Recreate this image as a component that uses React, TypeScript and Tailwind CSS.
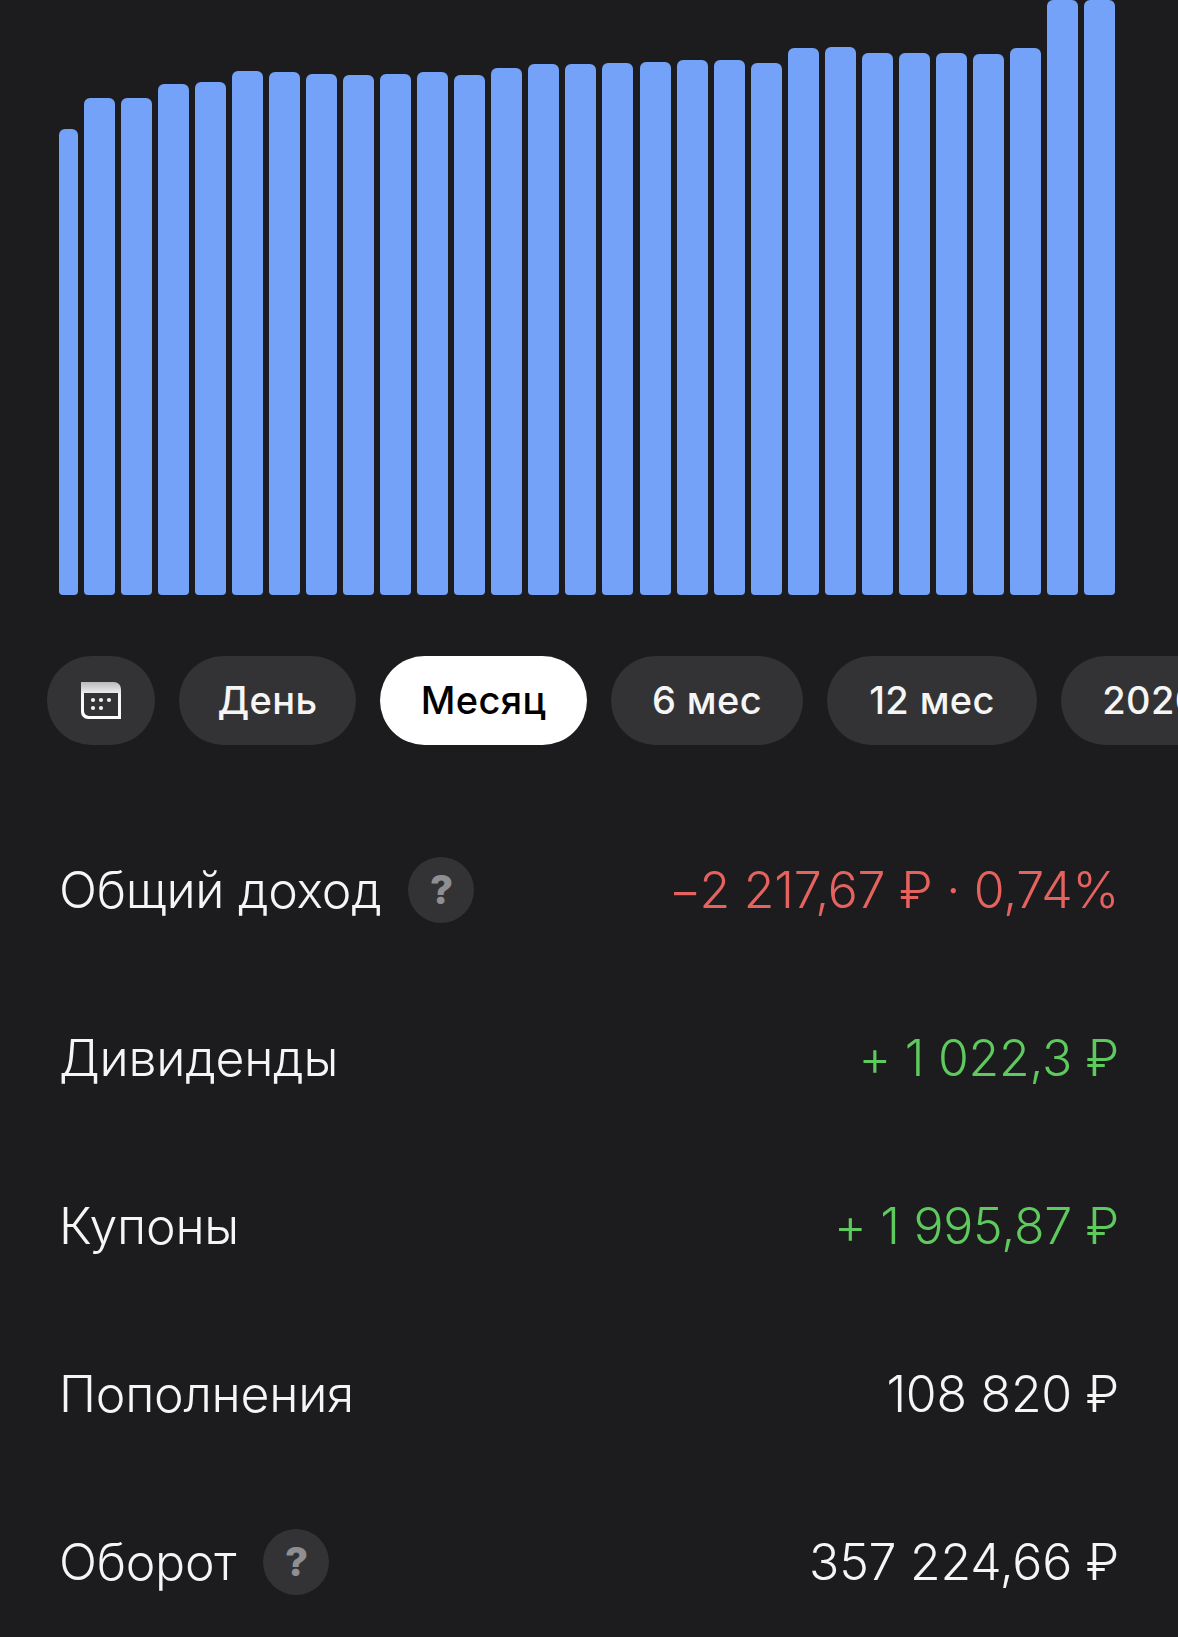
import React from "react";

const BAR_TOPS = [
  129, 98, 98, 84, 82, 71, 72, 74, 75, 74, 72, 75, 68, 64, 64, 63, 62, 60, 60, 63, 48, 47, 53, 53, 53, 54, 48, 0, 0,
];
const CHART_BOTTOM = 595;

const PERIODS = [
  { label: "День", width: "w-[177px]" },
  { label: "Месяц", width: "w-[207px]" },
  { label: "6 мес", width: "w-[192px]" },
  { label: "12 мес", width: "w-[210px]" },
  { label: "2020", width: "w-[180px]" },
];

const Hint = () => (
  <span className="ml-[27px] flex h-[66px] w-[66px] items-center justify-center rounded-full bg-[#333335] text-[40px] font-extrabold text-[#8e8e93]">
    ?
  </span>
);

const Row = ({ title, value, color, hint }: { title: string; value: string; color: string; hint?: boolean }) => (
  <div className="flex h-[168px] items-center justify-between pl-[59px] pr-[59px]">
    <div className="flex items-center text-[#f5f5f5]">
      <span>{title}</span>
      {hint && <Hint />}
    </div>
    <span className={color}>{value}</span>
  </div>
);

export default function App() {
  return (
    <div className="h-[1637px] w-full overflow-hidden bg-[#1c1c1e] font-['Inter',sans-serif]">
      <div className="flex h-[595px] items-end gap-[6.04px] pl-[59px]">
        {BAR_TOPS.map((top, i) => (
          <div
            key={i}
            className={`${i === 0 ? "w-[19px]" : "w-[31px]"} rounded-t-[6px] rounded-b-[4px] bg-[#73a2f8]`}
            style={{ height: CHART_BOTTOM - top }}
          />
        ))}
      </div>

      <div className="mt-[61px] flex gap-[24px] overflow-hidden pl-[47px]">
        <div className="flex h-[89px] w-[108px] shrink-0 items-center justify-center rounded-full bg-[#333335]">
          <svg width="40" height="37" viewBox="0 0 40 37">
            <defs>
              <linearGradient id="calendarHead" x1="0" y1="0" x2="0" y2="1">
                <stop offset="0" stopColor="#b9b9bb" />
                <stop offset="0.35" stopColor="#f5f5f5" />
                <stop offset="1" stopColor="#ffffff" />
              </linearGradient>
            </defs>
            <path d="M0 0H33a7 7 0 0 1 7 7V37H7a7 7 0 0 1-7-7Z" fill="url(#calendarHead)" />
            <path d="M3 11H37V34H8a5 5 0 0 1-5-5Z" fill="#333335" />
            <g fill="#f2f2f2">
              <circle cx="12" cy="18" r="2.1" />
              <circle cx="20" cy="18" r="2.1" />
              <circle cx="28" cy="18" r="2.1" />
              <circle cx="12" cy="26" r="2.1" />
              <circle cx="20" cy="26" r="2.1" />
            </g>
          </svg>
        </div>
        {PERIODS.map((period) => (
          <div
            key={period.label}
            className={`flex h-[89px] shrink-0 items-center justify-center rounded-[45px] text-[38px] font-medium tracking-[0.01em] ${period.width} ${
              period.label === "Месяц" ? "bg-white text-black" : "bg-[#333335] text-[#f5f5f5]"
            }`}
          >
            {period.label}
          </div>
        ))}
      </div>

      <div className="mt-[61px] text-[50px] font-[350] tracking-[-0.25px]">
        <Row title="Общий доход" value="−2 217,67 ₽ · 0,74%" color="text-[#e5625e]" hint />
        <Row title="Дивиденды" value="+ 1 022,3 ₽" color="text-[#5ec95c]" />
        <Row title="Купоны" value="+ 1 995,87 ₽" color="text-[#5ec95c]" />
        <Row title="Пополнения" value="108 820 ₽" color="text-[#f5f5f5]" />
        <Row title="Оборот" value="357 224,66 ₽" color="text-[#f5f5f5]" hint />
      </div>
    </div>
  );
}
